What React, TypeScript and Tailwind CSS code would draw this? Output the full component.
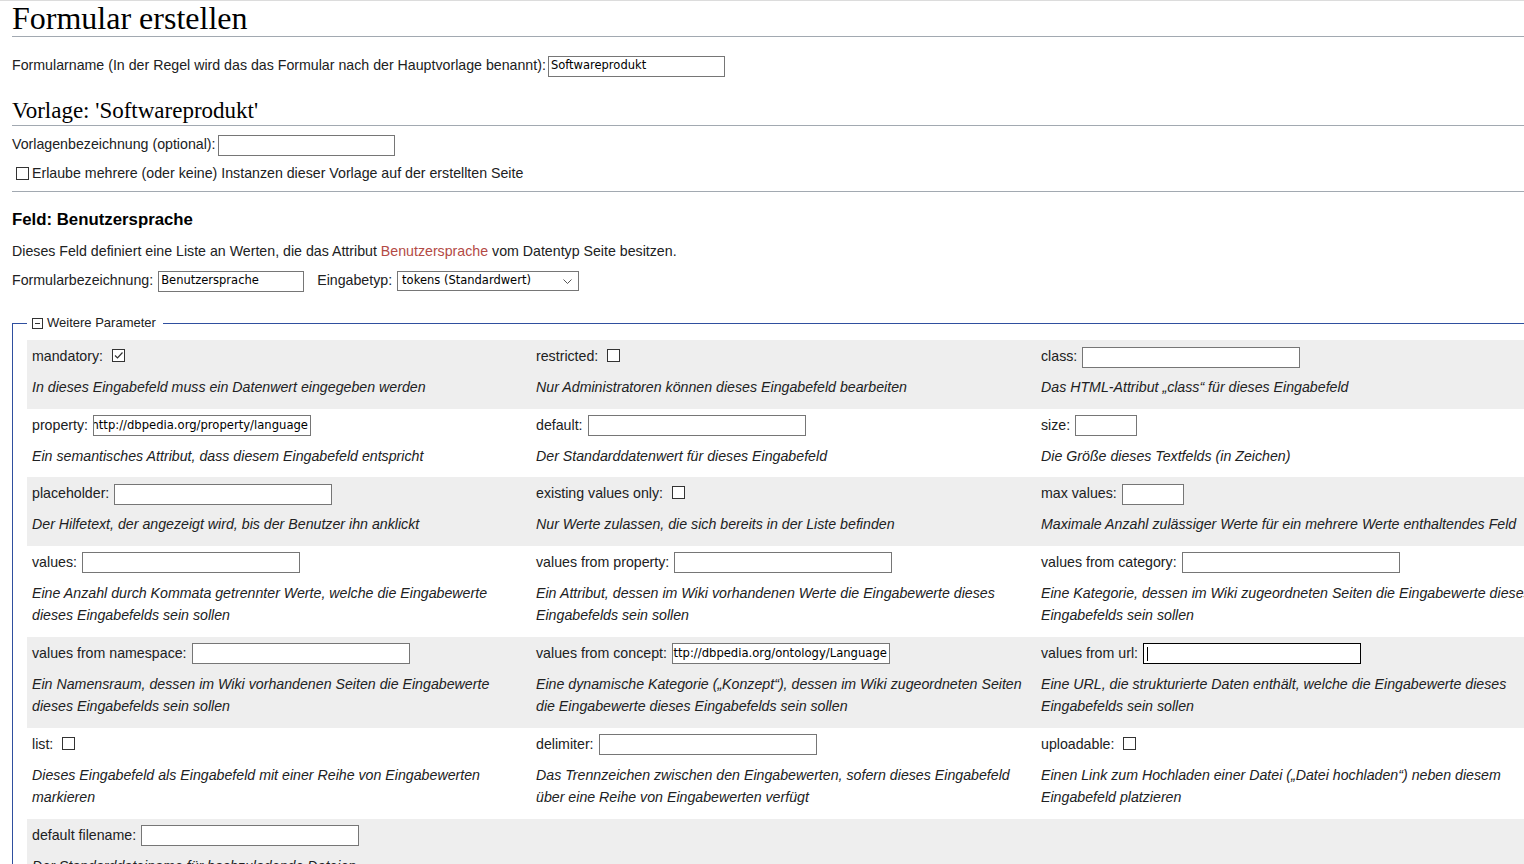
import clsx from 'clsx';

type Control =
	| { kind: 'check'; checked?: boolean }
	| { kind: 'text'; width: 'wide' | 'small'; value?: string; focused?: boolean };

interface ParamCell {
	label: string;
	control: Control;
	desc: string;
}

const rows: (ParamCell | null)[][] = [
	[
		{ label: 'mandatory:', control: { kind: 'check', checked: true }, desc: 'In dieses Eingabefeld muss ein Datenwert eingegeben werden' },
		{ label: 'restricted:', control: { kind: 'check' }, desc: 'Nur Administratoren können dieses Eingabefeld bearbeiten' },
		{ label: 'class:', control: { kind: 'text', width: 'wide' }, desc: 'Das HTML-Attribut „class“ für dieses Eingabefeld' },
	],
	[
		{ label: 'property:', control: { kind: 'text', width: 'wide', value: 'http://dbpedia.org/property/language' }, desc: 'Ein semantisches Attribut, dass diesem Eingabefeld entspricht' },
		{ label: 'default:', control: { kind: 'text', width: 'wide' }, desc: 'Der Standarddatenwert für dieses Eingabefeld' },
		{ label: 'size:', control: { kind: 'text', width: 'small' }, desc: 'Die Größe dieses Textfelds (in Zeichen)' },
	],
	[
		{ label: 'placeholder:', control: { kind: 'text', width: 'wide' }, desc: 'Der Hilfetext, der angezeigt wird, bis der Benutzer ihn anklickt' },
		{ label: 'existing values only:', control: { kind: 'check' }, desc: 'Nur Werte zulassen, die sich bereits in der Liste befinden' },
		{ label: 'max values:', control: { kind: 'text', width: 'small' }, desc: 'Maximale Anzahl zulässiger Werte für ein mehrere Werte enthaltendes Feld' },
	],
	[
		{ label: 'values:', control: { kind: 'text', width: 'wide' }, desc: 'Eine Anzahl durch Kommata getrennter Werte, welche die Eingabewerte dieses Eingabefelds sein sollen' },
		{ label: 'values from property:', control: { kind: 'text', width: 'wide' }, desc: 'Ein Attribut, dessen im Wiki vorhandenen Werte die Eingabewerte dieses Eingabefelds sein sollen' },
		{ label: 'values from category:', control: { kind: 'text', width: 'wide' }, desc: 'Eine Kategorie, dessen im Wiki zugeordneten Seiten die Eingabewerte dieses Eingabefelds sein sollen' },
	],
	[
		{ label: 'values from namespace:', control: { kind: 'text', width: 'wide' }, desc: 'Ein Namensraum, dessen im Wiki vorhandenen Seiten die Eingabewerte dieses Eingabefelds sein sollen' },
		{ label: 'values from concept:', control: { kind: 'text', width: 'wide', value: 'http://dbpedia.org/ontology/Language' }, desc: 'Eine dynamische Kategorie („Konzept“), dessen im Wiki zugeordneten Seiten die Eingabewerte dieses Eingabefelds sein sollen' },
		{ label: 'values from url:', control: { kind: 'text', width: 'wide', focused: true }, desc: 'Eine URL, die strukturierte Daten enthält, welche die Eingabewerte dieses Eingabefelds sein sollen' },
	],
	[
		{ label: 'list:', control: { kind: 'check' }, desc: 'Dieses Eingabefeld als Eingabefeld mit einer Reihe von Eingabewerten markieren' },
		{ label: 'delimiter:', control: { kind: 'text', width: 'wide' }, desc: 'Das Trennzeichen zwischen den Eingabewerten, sofern dieses Eingabefeld über eine Reihe von Eingabewerten verfügt' },
		{ label: 'uploadable:', control: { kind: 'check' }, desc: 'Einen Link zum Hochladen einer Datei („Datei hochladen“) neben diesem Eingabefeld platzieren' },
	],
	[
		{ label: 'default filename:', control: { kind: 'text', width: 'wide' }, desc: 'Der Standarddateiname für hochzuladende Dateien' },
		null,
		null,
	],
];

// looks like a text input; long values are shown scrolled to their end
function TextBox({
	className,
	value,
	scrolled,
	focused,
}: {
	className: string;
	value?: string;
	scrolled?: boolean;
	focused?: boolean;
}) {
	return (
		<span
			className={clsx(
				"flex h-[21px] shrink-0 items-center overflow-hidden whitespace-nowrap border bg-white px-[2px] font-['DejaVu_Sans',sans-serif] text-black",
				focused ? 'border-black' : 'border-[#767676]',
				scrolled ? 'justify-end text-[11.6px]' : 'text-[11.5px]',
				className,
			)}
		>
			{value}
			{focused && <span className="ml-px h-[14px] w-px bg-black" />}
		</span>
	);
}

function CheckBox({ checked, className }: { checked?: boolean; className?: string }) {
	return (
		<span
			className={clsx(
				'flex h-[13px] w-[13px] shrink-0 items-center justify-center border border-[#333] bg-white',
				className,
			)}
		>
			{checked && (
				<svg width="11" height="11" viewBox="0 0 11 11" fill="none">
					<path d="M2 5.5L4.5 8L9.5 2.5" stroke="#333" strokeWidth="1.2" />
				</svg>
			)}
		</span>
	);
}

function Cell({ cell }: { cell: ParamCell | null }) {
	if (!cell) return <div />;
	const { control } = cell;
	return (
		<div className="px-[5px] pb-[5px] pt-[6px]">
			<div className="flex h-[22px] items-center whitespace-nowrap">
				<span>{cell.label}</span>
				{control.kind === 'check' ? (
					<CheckBox checked={control.checked} className="mb-[3px] ml-[9px]" />
				) : (
					<TextBox
						className={clsx('ml-[5px]', control.width === 'wide' ? 'w-[218px]' : 'w-[62px]')}
						value={control.value}
						scrolled={!!control.value}
						focused={control.focused}
					/>
				)}
			</div>
			<p className="mt-2 mb-[5px] italic leading-[22.5px]">{cell.desc}</p>
		</div>
	);
}

export default function App() {
	return (
		<div className="min-h-screen w-full overflow-hidden border-t border-[#dcdcdc] bg-white pl-3 font-['Liberation_Sans',Arial,sans-serif] text-[14.2px] text-[#202122]">
			<h1 className="border-b border-[#a2a9b1] font-['Liberation_Serif','Times_New_Roman',serif] text-[32px] leading-[35px] text-black">
				Formular erstellen
			</h1>

			<div className="mt-[18px] flex h-[22px] items-center">
				<span>Formularname (In der Regel wird das das Formular nach der Hauptvorlage benannt):</span>
				<TextBox className="ml-[2px] w-[177px]" value="Softwareprodukt" />
			</div>

			<h2 className="mt-[20px] border-b border-[#a2a9b1] font-['Liberation_Serif','Times_New_Roman',serif] text-[23px] leading-[28px] text-black">
				Vorlage: 'Softwareprodukt'
			</h2>

			<div className="mt-[8px] flex h-[22px] items-center">
				<span>Vorlagenbezeichnung (optional):</span>
				<TextBox className="ml-[2px] w-[177px]" />
			</div>

			<div className="mt-[8px] flex h-[20px] items-center">
				<CheckBox className="mb-[2px] ml-[4px] mr-[3px]" />
				<span>Erlaube mehrere (oder keine) Instanzen dieser Vorlage auf der erstellten Seite</span>
			</div>

			<hr className="mt-[7px] border-0 border-t border-[#a2a9b1]" />

			<h3 className="mt-[18px] text-[16.8px] font-bold leading-[20px] text-black">Feld: Benutzersprache</h3>

			<p className="mt-[11px] leading-[20px]">
				Dieses Feld definiert eine Liste an Werten, die das Attribut{' '}
				<span className="text-[#b34a45]">Benutzersprache</span> vom Datentyp Seite besitzen.
			</p>

			<div className="mt-[9px] flex h-[22px] items-center">
				<span>Formularbezeichnung:</span>
				<TextBox className="ml-[5px] w-[146px]" value="Benutzersprache" />
				<span className="ml-[13px]">Eingabetyp:</span>
				<span className="ml-[5px] flex h-[20px] w-[182px] items-center justify-between border border-[#767676] bg-white pl-[4px] pr-[6px] font-['DejaVu_Sans',sans-serif] text-[11.5px] text-black">
					tokens (Standardwert)
					<svg width="9" height="5" viewBox="0 0 9 5" fill="none">
						<path d="M0.5 0.5L4.5 4.5L8.5 0.5" stroke="#555" strokeWidth="1" />
					</svg>
				</span>
			</div>

			<fieldset className="mt-[23px] min-w-max border border-[#2f4f9f] pb-3 pl-[14px] pt-[9px]">
				<legend className="flex items-center px-[5px] text-[13px] leading-[16px]">
					<span className="mr-[4px] flex h-[11px] w-[11px] items-center justify-center border border-[#333]">
						<span className="h-px w-[5px] bg-[#333]" />
					</span>
					<span className="pr-[2px]">Weitere Parameter</span>
				</legend>
				<div className="flex flex-col">
					{rows.map((row, i) => (
						<div
							key={i}
							className={clsx(
								'grid grid-cols-[504px_505px_505px]',
								i % 2 === 0 ? 'bg-[#eeeeee]' : 'bg-white',
							)}
						>
							{row.map((cell, j) => (
								<Cell key={j} cell={cell} />
							))}
						</div>
					))}
				</div>
			</fieldset>
		</div>
	);
}
